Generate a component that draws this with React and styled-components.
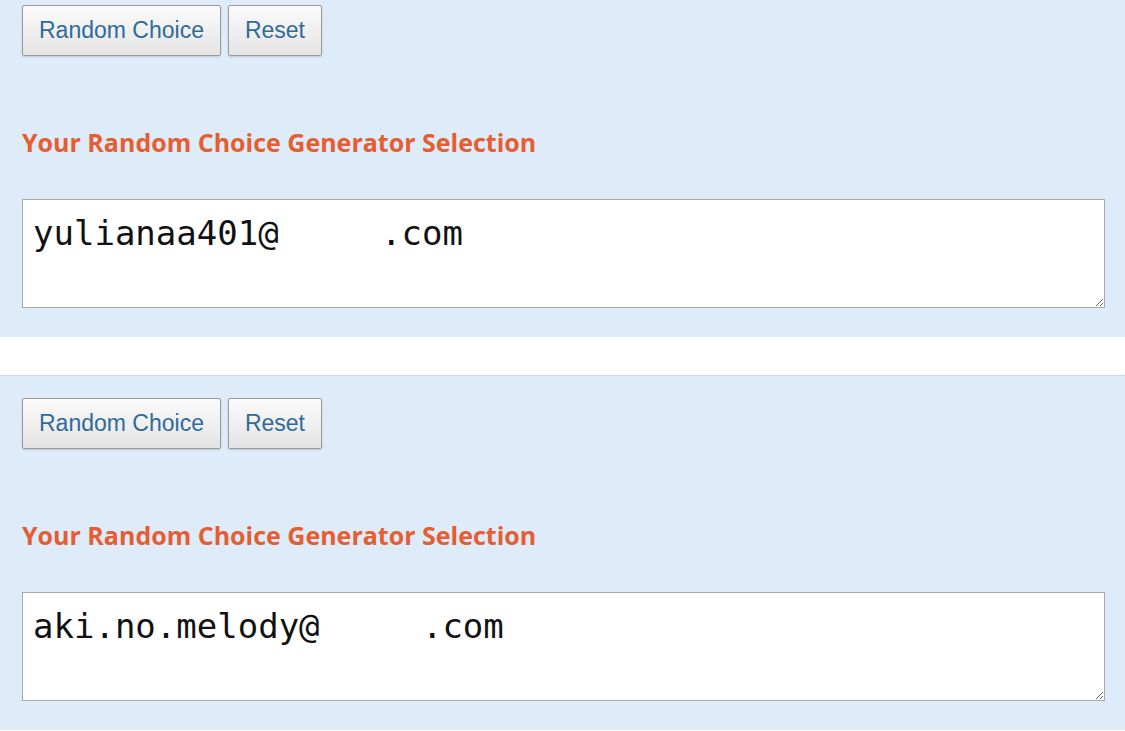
import styled, { createGlobalStyle } from 'styled-components'

const GlobalStyle = createGlobalStyle`
   html, body {
      margin: 0;
      padding: 0;
      background: #fff;
   }
`

const Page = styled.div`
   width: 1125px;
   height: 731px;
   overflow: hidden;
   display: flex;
   flex-direction: column;
   gap: 38px;
`

const Panel = styled.section`
   background: #deebf8;
   padding: ${(p) => p.$top}px 21px 29px 22px;
   border-top: ${(p) => (p.$line ? '1px solid #cdd9e5' : 'none')};
`

const ButtonRow = styled.div`
   display: flex;
   gap: 7px;
`

const Button = styled.button`
   font-family: 'Liberation Sans', Arial, sans-serif;
   font-size: 23px;
   color: #2f6a9c;
   height: 51px;
   padding: 0 16px;
   background: linear-gradient(#fbfbfb, #e4e4e4);
   border: 1px solid #9a9a9a;
   border-radius: 2px;
   box-shadow: 0 1px 2px rgba(0, 0, 0, 0.15);
   cursor: pointer;
`

const Heading = styled.h3`
   font-family: 'Open Sans', sans-serif;
   font-weight: 700;
   font-size: 25px;
   color: #e55d31;
   margin: 69px 0 40px;
   line-height: 34px;
`

const Output = styled.textarea`
   display: block;
   box-sizing: border-box;
   width: 1083px;
   height: 109px;
   margin: 0;
   padding: 12px 10px;
   border: 1px solid #a9a9a9;
   background: #fff;
   font-family: 'DejaVu Sans Mono', monospace;
   font-size: 34px;
   line-height: 42px;
   color: #111;
   outline: none;
`

const results = [
   { top: 5, line: false, value: 'yulianaa401@     .com' },
   { top: 22, line: true, value: 'aki.no.melody@     .com' },
]

const App = () => {
   return (
      <>
         <GlobalStyle />
         <Page>
            {results.map((r, i) => (
               <Panel key={i} $top={r.top} $line={r.line}>
                  <ButtonRow>
                     <Button>Random Choice</Button>
                     <Button>Reset</Button>
                  </ButtonRow>
                  <Heading>Your Random Choice Generator Selection</Heading>
                  <Output readOnly value={r.value} />
               </Panel>
            ))}
         </Page>
      </>
   )
}

export default App
